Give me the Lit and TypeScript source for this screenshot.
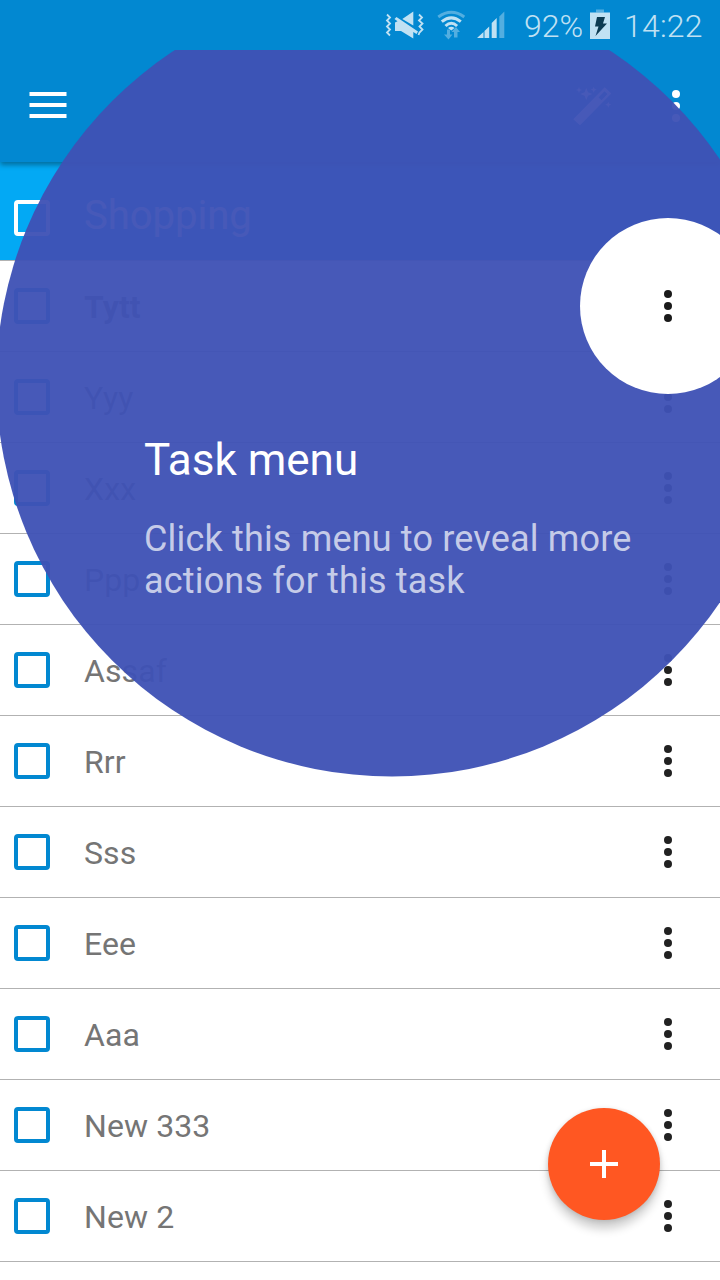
import { LitElement, html, css, svg } from "lit";
import { customElement, property } from "lit/decorators.js";

@customElement("more-dots")
class MoreDots extends LitElement {
  static styles = css`
    :host { display: block; width: 8px; height: 32px; }
    svg { display: block; fill: currentColor; }
  `;
  render() {
    return html`<svg width="8" height="32" viewBox="0 0 8 32">
      <circle cx="4" cy="4" r="4" /><circle cx="4" cy="16" r="4" /><circle cx="4" cy="28" r="4" />
    </svg>`;
  }
}

@customElement("task-row")
class TaskRow extends LitElement {
  @property() label = "";
  @property({ type: Boolean }) strong = false;
  static styles = css`
    :host {
      display: flex; align-items: center; box-sizing: border-box; height: 91px;
      padding: 0 48px 0 14px; border-bottom: 1px solid #b2b2b2; color: #757575;
    }
    .box { box-sizing: border-box; width: 36px; height: 36px; border: 4px solid #0288d1; border-radius: 4px; }
    .label { flex: 1; margin-left: 34px; font-size: 32px; line-height: 38px; padding-top: 2px; letter-spacing: 0.1px; }
    .strong { font-weight: 700; }
    more-dots { color: #212121; }
  `;
  render() {
    return html`<div class="box"></div>
      <div class="label ${this.strong ? "strong" : ""}">${this.label}</div>
      <more-dots></more-dots>`;
  }
}

@customElement("app-root")
class AppRoot extends LitElement {
  static styles = css`
    :host {
      display: block; position: relative; width: 720px; height: 1280px; overflow: hidden;
      background: #fff; font-family: Roboto, sans-serif;
    }
    svg { display: block; }
    .status {
      position: relative; z-index: 1;
      box-sizing: border-box; height: 50px; padding-left: 384px; background: #0288d1;
      display: flex; color: #c0e1f3; font-size: 32px; line-height: 52px;
    }
    .status svg { flex: none; }
    .percent { width: 66px; margin-left: 14px; font-weight: 300; white-space: nowrap; }
    .clock { margin-left: 14px; font-weight: 300; letter-spacing: 0.2px; white-space: nowrap; }
    .toolbar {
      position: relative; box-sizing: border-box; height: 112px; background: #0288d1; color: #fff;
      display: flex; align-items: center; padding: 0 40px 2px 29px;
      box-shadow: 0 3px 5px rgba(0, 0, 0, 0.35);
    }
    .spacer { flex: 1; }
    .toolbar more-dots { margin: 2px 0 0 60px; }
    .heading {
      box-sizing: border-box; height: 99px; padding: 14px 0 0 14px; background: #03a9f4;
      border-bottom: 1px solid #b2b2b2; display: flex; align-items: center; color: #fff;
    }
    .box { box-sizing: border-box; width: 36px; height: 36px; border: 4px solid #fff; border-radius: 4px; }
    .title { margin-left: 34px; font-size: 40px; line-height: 48px; padding-bottom: 4px; }
    .fab {
      position: absolute; left: 548px; top: 1108px; width: 112px; height: 112px; border-radius: 50%;
      background: #ff5722; display: grid; place-items: center;
      box-shadow: 0 9px 10px rgba(0, 0, 0, 0.19), 0 1px 5px rgba(0, 0, 0, 0.14);
    }
    .coach { position: absolute; left: 0; top: 50px; width: 720px; height: 1230px; overflow: hidden; }
    .coach > svg { position: absolute; left: 0; top: 0; }
    .message { position: absolute; left: 144px; top: 384px; width: 520px; color: #fff; }
    .message-title { font-size: 44px; line-height: 52px; white-space: nowrap; }
    .message-text {
      margin-top: 32px; font-size: 36px; line-height: 42px; letter-spacing: 0.17px;
      color: rgba(255, 255, 255, 0.7); white-space: nowrap;
    }
  `;

  private tasks = ["Tytt", "Yyy", "Xxx", "Ppp", "Assaf", "Rrr", "Sss", "Eee", "Aaa", "New 333", "New 2"];

  private star(cx: number, cy: number, r: number) {
    const k = r * 0.28;
    return svg`<path d="M${cx} ${cy - r}L${cx + k} ${cy - k}L${cx + r} ${cy}L${cx + k} ${cy + k}L${cx} ${cy + r}L${cx - k} ${cy + k}L${cx - r} ${cy}L${cx - k} ${cy - k}Z"/>`;
  }

  render() {
    return html`
      <div class="status">
        <svg width="126" height="50" viewBox="384 0 126 50" fill="#c0e1f3">
          <g fill="none" stroke="#c0e1f3" stroke-width="1.8">
            <path d="M387 14.500l3 3-3 3 3 3-3 3 3 3-3 3 3 3" />
            <path d="M419 14.500l3 3-3 3 3.500 3-3 3 3 3-3 3-1 2.500" />
          </g>
          <path d="M394.500 19L396.500 17L418 31.500L416.500 34L413.300 32V38.500L401 31H395V22.500L397.500 21.300Z" />
          <path d="M413.300 11.500V25.500L402.300 19Z" />
          <g fill="none" stroke="#c0e1f3" stroke-width="3">
            <path d="M438.300 17Q451.300 7.600 464.300 17" stroke="#53aee0" />
            <path d="M441.800 21.700Q451.300 14 460.800 21.700" />
            <path d="M445.500 26Q451.300 20.500 457.100 26" />
          </g>
          <path d="M448 28Q451.300 25.500 454.600 28L451.300 30.500Z" />
          <g fill="#53aee0">
            <path d="M447 29.500h3v5h2.500l-4 5-4.500-5h3z" />
            <path d="M454 37.500V32h-2.500l4.500-5 4 5H457.500v5.500z" />
          </g>
          <path d="M477 38L483.500 32V38ZM484.500 31L489.200 26.500V38H484.500ZM491.700 23L496.700 18V38H491.700Z" />
          <path fill="#53aee0" d="M499.300 16.500L504.300 11.500V38H499.300Z" />
        </svg>
        <span class="percent">92%</span>
        <svg width="20" height="50" viewBox="590 0 20 50">
          <path fill="#53aee0" d="M596 9.500h8v3h-8z" />
          <path fill="#c0e1f3" d="M590 12.500h20V39h-20z" />
          <path fill="#0d3b52" d="M597 17h8l-2 6.500h4L595.500 36l3-9.500H595z" />
        </svg>
        <span class="clock">14:22</span>
      </div>

      <div class="toolbar">
        <svg width="38" height="26" viewBox="0 0 38 26" fill="#fff">
          <path d="M.5 0h37v4H.5zM.5 11h37v4H.5zM.5 22h37v4H.5z" />
        </svg>
        <div class="spacer"></div>
        <svg width="40" height="40" viewBox="572 85 40 40" overflow="visible" fill="#fff">
          <path fill-rule="evenodd" d="M573.300 119.300L604.700 87.300L611.300 93.500L580 125.300ZM598.500 97.500L604.500 91.300L607.500 94L601.500 100.200Z" />
          ${this.star(586.3, 94, 6)}${this.star(579, 90, 3)}${this.star(593.7, 89.7, 3)}${this.star(608.3, 104.7, 3)}
        </svg>
        <more-dots></more-dots>
      </div>

      <div class="heading">
        <div class="box"></div>
        <div class="title">Shopping</div>
      </div>
      ${this.tasks.map((t, i) => html`<task-row .label=${t} .strong=${i === 0}></task-row>`)}

      <div class="fab">
        <svg width="28" height="28" viewBox="0 0 28 28" fill="#fff"><path d="M12 0h4v12h12v4H16v12h-4V16H0v-4h12z" /></svg>
      </div>

      <div class="coach">
        <svg width="720" height="1230" viewBox="0 50 720 1230">
          <circle cx="392" cy="380.800" r="395.700" fill="#3f51b5" fill-opacity="0.955" />
          <circle cx="668" cy="306" r="88" fill="#fff" />
          <g fill="#1a1a1a"><circle cx="668" cy="294" r="4" /><circle cx="668" cy="306" r="4" /><circle cx="668" cy="318" r="4" /></g>
        </svg>
        <div class="message">
          <div class="message-title">Task menu</div>
          <div class="message-text">Click this menu to reveal more<br />actions for this task</div>
        </div>
      </div>
    `;
  }
}
